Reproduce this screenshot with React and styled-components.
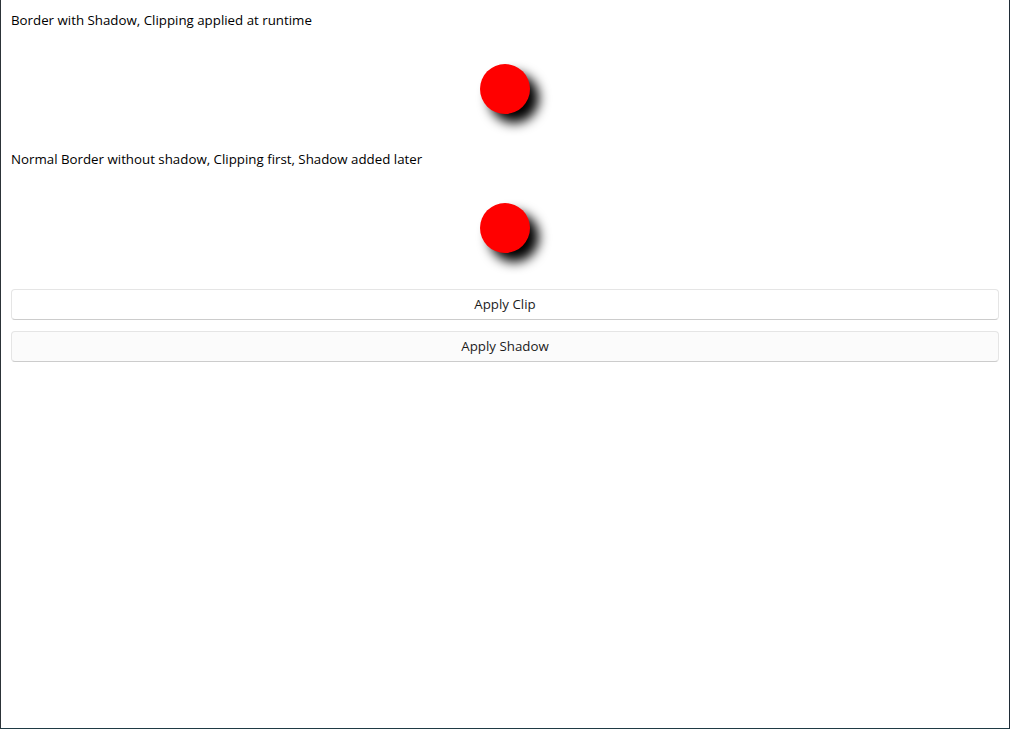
import React from "react";
import styled, { createGlobalStyle } from "styled-components";

const GlobalStyle = createGlobalStyle`
  html, body {
    margin: 0;
    padding: 0;
    background: #ffffff;
  }
  body {
    font-family: "Open Sans", "Noto Sans", sans-serif;
    color: #000000;
  }
`;

const sections = [
  { label: "Border with Shadow, Clipping applied at runtime" },
  { label: "Normal Border without shadow, Clipping first, Shadow added later" },
];

const App = () => {
  return (
    <>
      <GlobalStyle />
      <Window>
        {sections.map((s) => (
          <Section key={s.label}>
            <Label>{s.label}</Label>
            <Stage>
              <Dot />
            </Stage>
          </Section>
        ))}
        <Buttons>
          <Button>Apply Clip</Button>
          <Button $soft>Apply Shadow</Button>
        </Buttons>
      </Window>
    </>
  );
};

export default App;

const Window = styled.div`
  box-sizing: border-box;
  width: 1010px;
  height: 729px;
  padding: 10px 10px 0 10px;
  border-left: 1px solid #2c3338;
  border-right: 1px solid #1f2b36;
  border-bottom: 1px solid #1f3a44;
  display: flex;
  flex-direction: column;
`;

const Section = styled.div`
  display: flex;
  flex-direction: column;
  height: 139px;
`;

const Label = styled.div`
  height: 20px;
  line-height: 20px;
  font-size: 13.3px;
  color: #000;
  white-space: nowrap;
`;

const Stage = styled.div`
  flex: 1;
  display: flex;
  align-items: center;
  justify-content: center;
  padding-bottom: 1px;
`;

const Dot = styled.div`
  width: 50px;
  height: 50px;
  border-radius: 50%;
  background: #ff0000;
  box-shadow: 9px 9px 12px rgba(0, 0, 0, 1);
`;

const Buttons = styled.div`
  display: flex;
  flex-direction: column;
  gap: 11px;
  margin-top: 1px;
`;

const Button = styled.button`
  box-sizing: border-box;
  height: 31px;
  width: 100%;
  border: 1px solid #e5e5e5;
  border-bottom-color: #cccccc;
  border-radius: 4px;
  background: ${(p) => (p.$soft ? "#fbfbfb" : "#ffffff")};
  font-family: "Open Sans", "Noto Sans", sans-serif;
  font-size: 13.3px;
  color: #1b1b1b;
  padding: 0 0 1px 0;
  cursor: pointer;
  outline: none;
`;
